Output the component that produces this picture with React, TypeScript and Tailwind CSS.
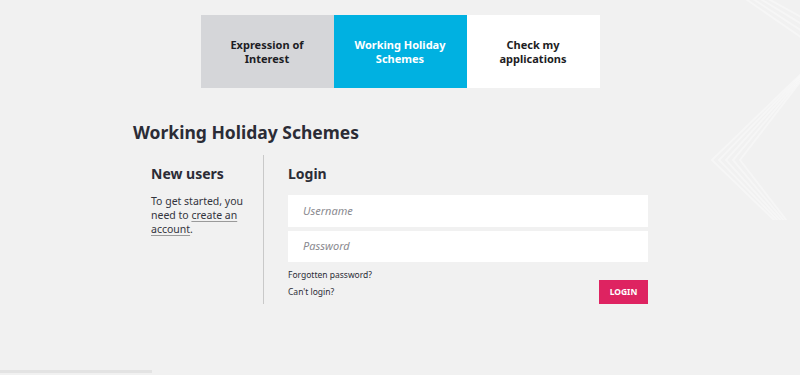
export default function App() {
  return (
    <div
      className="relative min-h-[375px] overflow-hidden bg-[#f1f1f1] text-[#2b2c36]"
      style={{ fontFamily: '"Noto Sans", "Open Sans", sans-serif' }}
    >
      {/* decorative chevrons */}
      <svg className="absolute right-0 top-0" width="90" height="220" viewBox="0 0 90 220" fill="none">
        {[0, 7, 14, 21, 28].map((o) => (
          <polyline
            key={o}
            points={`${95},${70 + o * 0.2} ${2 + o},${160} ${95},${250 - o * 0.2}`}
            stroke="#ffffff"
            strokeOpacity="0.35"
            strokeWidth="2"
          />
        ))}
        {[0, 7, 14, 21].map((o) => (
          <line
            key={o}
            x1={30 + o}
            y1={-5}
            x2={95}
            y2={40 - o}
            stroke="#ffffff"
            strokeOpacity="0.35"
            strokeWidth="2"
          />
        ))}
      </svg>

      <div className="relative mx-auto w-[534px]">
        {/* tabs */}
        <div className="mx-auto mt-[15px] flex w-[399px]">
          <div className="flex h-[73px] w-[133px] items-center justify-center bg-[#d5d6d9] text-center text-[11px] font-bold leading-[14px] text-[#1d1d24]">
            Expression of<br />Interest
          </div>
          <div className="flex h-[73px] w-[133px] items-center justify-center bg-[#00b1e1] text-center text-[11px] font-bold leading-[14px] text-white">
            Working Holiday<br />Schemes
          </div>
          <div className="flex h-[73px] w-[133px] items-center justify-center bg-white text-center text-[11px] font-bold leading-[14px] text-[#1d1d24]">
            Check my<br />applications
          </div>
        </div>

        <h1 className="mt-[31px] text-[17.5px] font-bold leading-[26px]">Working Holiday Schemes</h1>

        <div className="mt-[10px] flex">
          <div className="w-[131px] border-r border-[#c9c9c9] pl-[18px] pt-[9px]">
            <h2 className="text-[14px] font-bold leading-[20px]">New users</h2>
            <p className="mt-[10px] w-[100px] text-[10.5px] leading-[14px] text-[#33343d]">
              To get started, you need to{' '}
              <span className="underline decoration-[#9a9a9a] underline-offset-2">create an account</span>.
            </p>
          </div>
          <div className="flex-1 pl-[24px] pr-[19px] pt-[9px]">
            <h2 className="text-[14px] font-bold leading-[20px]">Login</h2>
            <div className="mt-[11px] flex h-[32px] items-center bg-white pl-[15px] text-[11px] italic text-[#8a8a8f]">
              Username
            </div>
            <div className="mt-[4px] flex h-[31px] items-center bg-white pl-[15px] text-[11px] italic text-[#8a8a8f]">
              Password
            </div>
            <div className="mt-[4px] flex justify-between">
              <div className="text-[8.5px] leading-[17px] text-[#2b2c36]">
                <div>Forgotten password?</div>
                <div>Can't login?</div>
              </div>
              <div className="mt-[14px] flex h-[24px] w-[49px] items-center justify-center bg-[#de2361] text-[8.5px] font-bold text-white">
                LOGIN
              </div>
            </div>
          </div>
        </div>
      </div>

      <div className="absolute bottom-[2px] left-0 h-[3px] w-[152px] bg-[#e3e3e3]" />
    </div>
  );
}
